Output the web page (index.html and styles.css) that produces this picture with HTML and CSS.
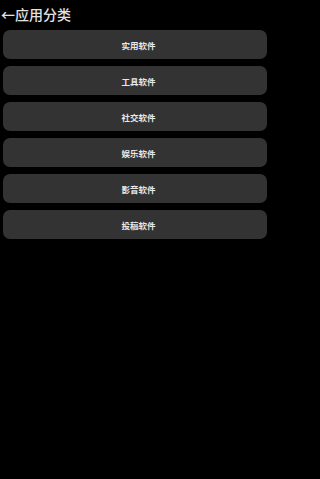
FILE: index.html
```html
<!DOCTYPE html>
<html lang="zh-CN">
<head>
<meta charset="utf-8">
<link rel="stylesheet" href="styles.css">
</head>
<body>
<div class="page">
  <div class="header"><span class="back">←</span>应用分类</div>
  <div class="list">
    <div class="item">实用软件</div>
    <div class="item">工具软件</div>
    <div class="item">社交软件</div>
    <div class="item">娱乐软件</div>
    <div class="item">影音软件</div>
    <div class="item">投稿软件</div>
  </div>
</div>
</body>
</html>
```
FILE: styles.css
```css
html, body {
  margin: 0;
  padding: 0;
  background: #000;
  height: 100%;
}
body {
  font-family: "Noto Sans CJK SC", "Noto Sans", sans-serif;
  color: #e0e0e0;
}
.page {
  width: 270px;
}
.header {
  height: 30px;
  line-height: 29px;
  font-size: 14px;
  font-weight: 500;
  padding-left: 1px;
  color: #e2e2e2;
}
.list {
  display: flex;
  flex-direction: column;
  gap: 7px;
  padding: 0 3px;
}
.item {
  height: 29px;
  background: #333333;
  border-radius: 7px;
  display: flex;
  align-items: center;
  justify-content: center;
  padding-left: 7px;
  font-size: 8.5px;
  font-weight: bold;
  color: #e8e8e8;
}
```
